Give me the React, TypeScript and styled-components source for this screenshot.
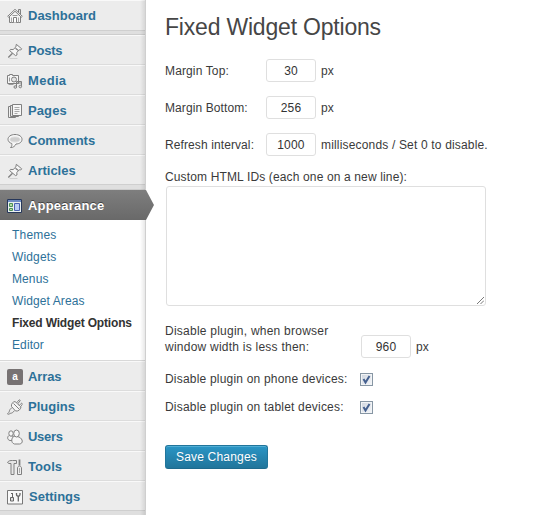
import React from "react";
import styled, { createGlobalStyle, css } from "styled-components";

const GlobalStyle = createGlobalStyle`
  * { box-sizing: border-box; }
  body { margin: 0; background: #fff; overflow: hidden; }
  body, input, textarea, button { font-family: "Liberation Sans", Arial, sans-serif; }
`;

const Page = styled.div`
  display: flex;
  width: 550px;
  height: 515px;
  font-size: 12px;
  color: #3a3a3a;
`;

const Sidebar = styled.nav`
  width: 146px;
  flex: none;
  position: relative;
  background: #ececec;
  border-right: 1px solid #cfcfcf;
  &::after {
    content: "";
    position: absolute;
    top: 0;
    bottom: 0;
    right: 0;
    width: 5px;
    background: linear-gradient(to right, rgba(0, 0, 0, 0), rgba(0, 0, 0, 0.09));
  }
`;

const MenuItem = styled.a<{ $first?: boolean; $last?: boolean }>`
  display: flex;
  align-items: center;
  height: ${(p) => (p.$first ? 31 : 30)}px;
  padding: ${(p) => (p.$first ? 0 : 1)}px 0 0 7px;
  border-top: 1px solid #f9f9f9;
  border-bottom: 1px solid ${(p) => (p.$last ? "#cfcfcf" : "#dcdcdc")};
  color: #2d7199;
  font-size: 13px;
  font-weight: bold;
  text-decoration: none;
`;

const MenuIcon = styled.svg`
  width: 16px;
  height: 16px;
  flex: none;
  margin-right: 5px;
  fill: none;
  stroke: #808080;
  stroke-width: 1;
`;

const MenuLabel = styled.span<{ $spacing?: number; $indent?: number }>`
  letter-spacing: ${(p) => p.$spacing ?? 0}px;
  margin-left: ${(p) => p.$indent ?? 0}px;
  line-height: 16px;
`;

const Separator = styled.div<{ $height: number }>`
  height: ${(p) => p.$height}px;
  background: #dfdfdf;
  border-bottom: 1px solid #cdcdcd;
`;

const Current = styled.a`
  display: flex;
  align-items: center;
  position: relative;
  z-index: 1;
  width: 154px;
  height: 30px;
  padding: 2px 0 0 7px;
  background: linear-gradient(#7e7e7e, #696969);
  clip-path: polygon(0 0, 146px 0, 154px 15px, 146px 30px, 0 30px);
  color: #fff;
  font-size: 13px;
  font-weight: bold;
  text-shadow: 0 -1px 0 #444;
`;

const Submenu = styled.div`
  display: flex;
  flex-direction: column;
  height: 141px;
  padding: 4px 0 0 12px;
  background: #fff;
  border-bottom: 1px solid #d8d8d8;
`;

const SubLink = styled.a<{ $active?: boolean; $spacing?: number }>`
  height: 22px;
  line-height: 22px;
  white-space: nowrap;
  letter-spacing: ${(p) => p.$spacing ?? 0}px;
  color: #2d7199;
  ${(p) =>
    p.$active &&
    css`
      color: #333;
      font-weight: bold;
    `}
`;

const Content = styled.main`
  flex: 1;
  padding: 12px 0 0 19px;
`;

const Title = styled.h1`
  margin: 0 0 17px;
  height: 30px;
  line-height: 30px;
  font-size: 23px;
  font-weight: normal;
  letter-spacing: -0.2px;
  color: #464646;
`;

const FieldRow = styled.div<{ $height: number; $align?: string }>`
  display: flex;
  align-items: ${(p) => p.$align ?? "center"};
  height: ${(p) => p.$height}px;
`;

const FieldLabel = styled.label<{ $width?: number; $spacing?: number; $lift?: number }>`
  width: ${(p) => (p.$width ? `${p.$width}px` : "auto")};
  padding-bottom: ${(p) => p.$lift ?? 0}px;
  line-height: 16px;
  white-space: nowrap;
  letter-spacing: ${(p) => p.$spacing ?? 0}px;
`;

const NumberInput = styled.input`
  width: 50px;
  height: 23px;
  padding: 0;
  margin: 0 5px 0 0;
  border: 1px solid #dfdfdf;
  border-radius: 3px;
  background: #fff;
  color: #333;
  font-size: 12px;
  letter-spacing: 0.2px;
  text-align: center;
`;

const IdsLabel = styled(FieldLabel)`
  display: block;
  margin-top: 13px;
`;

const IdsArea = styled.div`
  display: flex;
  position: relative;
  width: 320px;
  height: 120px;
  margin: 1px 0 17px 1px;
`;

const IdsInput = styled.textarea`
  flex: 1;
  border: 1px solid #dfdfdf;
  border-radius: 3px;
  resize: none;
  background: #fff;
`;

const Grip = styled.svg`
  position: absolute;
  right: 2px;
  bottom: 2px;
  width: 7px;
  height: 7px;
  stroke: #666;
  stroke-width: 1;
  fill: none;
`;

const Check = styled.span`
  display: flex;
  width: 13px;
  height: 13px;
  border: 1px solid #8796a4;
  background: linear-gradient(135deg, #cfd5de, #f5f7fa);
  box-shadow: inset 0 0 0 1px #f2f4f6;
  svg {
    width: 11px;
    height: 11px;
    fill: none;
    stroke: #45608f;
    stroke-width: 2;
  }
`;

const SaveButton = styled.button`
  display: block;
  width: 103px;
  height: 24px;
  margin-top: 31px;
  padding: 0;
  border: 1px solid #21759b;
  border-bottom-color: #1e6a8d;
  border-radius: 3px;
  background: linear-gradient(#2a95c5, #21759b);
  box-shadow: inset 0 1px 0 rgba(120, 200, 230, 0.5);
  color: #fff;
  font-size: 12px;
  letter-spacing: 0.2px;
  text-shadow: 0 1px 0 rgba(0, 0, 0, 0.1);
`;

const icons: Record<string, React.ReactNode> = {
  home: (
    <>
      <path d="M2.5 8v6.500h11V8L8 3z" fill="#f6f6f6" />
      <path d="M11.500 4.500v-3h2v5" fill="#ddd" />
      <path d="M.7 8.300 8 1.300l7.300 7-1 .9L8 3.300 1.700 9.200z" fill="#fafafa" />
      <path d="M6.500 14.500v-5h3v5" fill="#fff" />
      <path d="M4.500 9.500v5M11.500 9.500v5" stroke="#aaa" />
      <path d="M5.500 7.500h5" stroke="#999" />
    </>
  ),
  pin: (
    <>
      <path d="m9.300 1.300 5.400 4.500-1 1.200-1.500-.2-2.400 2.700.2 2.500-1.500.6L2.700 7.700l.8-1.300 2.600.2 2.800-2.700z" fill="#f6f6f6" />
      <path d="M5.500 10.200 1.300 14.500M8.500 5.300l2.500 2" strokeWidth="1.300" />
      <path d="M2.500 15.500h8" stroke="#d0d0d0" />
    </>
  ),
  media: (
    <>
      <path d="M.5 2.500h2v-1h3v1h6v8H.5z" fill="#f5f5f5" />
      <circle cx="7" cy="6.500" r="2.500" fill="#e4e4e4" />
      <path d="M2.500 4.500v4M1.500 11.500h5" stroke="#999" />
      <path d="M9.500 14V8.500h5v5M9.500 10h5" />
      <circle cx="8.300" cy="14" r="1.300" fill="#ddd" />
      <circle cx="13.300" cy="13.500" r="1.300" fill="#ddd" />
    </>
  ),
  pages: (
    <>
      <path d="M3.500 3.500h-2v11h7V13" fill="#f0f0f0" />
      <path d="M5 2.500H3.500v11h8V12" fill="#e4e4e4" />
      <path d="M5.500 1.500h9v11h-9z" fill="#f7f7f7" />
      <path d="M7.500 4.500h5M7.500 6.500h5M7.500 8.500h5M7.500 10.500h3" stroke="#aaa" />
    </>
  ),
  comment: (
    <>
      <path d="M8 1.500c4 0 7 2 7 4.800s-2.500 4.600-6 4.700c-.8 2-3 3.800-5.500 3.500C5 13.300 5 12 4.800 10.500 2.500 9.800 1 8.300 1 6.300 1 3.500 4 1.500 8 1.500z" fill="#f8f8f8" />
      <path d="M8 4c3 0 5 1 5 2.500S11 9 8 9 3 8 3 6.500 5 4 8 4z" fill="#cfcfcf" stroke="#dcdcdc" />
    </>
  ),
  appearance: (
    <>
      <path d="M.5 1.500h14v13H.5z" fill="#eaf0ee" stroke="#26375a" />
      <path d="M1 3h13" stroke="#6f8dc4" strokeWidth="2" />
      <path d="M2.500 5.500h3v3h-3zM2.500 10.500h3v2h-3z" fill="#b4dba6" stroke="#4b9157" />
      <path d="M7.500 5.500h5v7h-5z" fill="#b9cdf4" stroke="#4a62b0" />
    </>
  ),
  plugin: (
    <>
      <path d="M4.500 7.500 8.500 12c3 .5 5-1.500 5.500-4L8 2.500C5.500 3 4 5 4.500 7.500z" fill="#f4f4f4" />
      <path d="M9.500 4 12 1c.7-.6 1.600.2 1 1l-2.500 3M12 7l2-2.500c.7-.7 1.700.1 1.100 1L13 8.500" fill="#fff" />
      <path d="M6.500 4.500 12 10M5 8.500 3 10.500c-.8 1 0 2-2.500 4.500l1 .7c2-2.200 3-1.200 4-2l2-2" />
    </>
  ),
  users: (
    <>
      <path d="M2.500 6.500C0 7 0 11 3 11.500h3V7z" fill="#f5f5f5" />
      <ellipse cx="4" cy="4.500" rx="2.200" ry="2.700" fill="#f5f5f5" />
      <path d="M8 7C4 8 3.500 14 7.500 15h5c4-.5 3.500-5-.5-7z" fill="#f5f5f5" />
      <ellipse cx="9.500" cy="4.500" rx="2.800" ry="3.500" fill="#f7f7f7" />
    </>
  ),
  tools: (
    <>
      <path d="M.5 3.500c1-2 3-2 5-2h4v3H7v11H4v-11H2z" fill="#e6e6e6" />
      <path d="M12.500 .5v6" strokeWidth="1.800" />
      <path d="M10.500 15.500V9c0-1 1-2 2-2s2 1 2 2v6.500z" fill="#eee" />
      <path d="M12.500 9v5" stroke="#aaa" />
    </>
  ),
  settings: (
    <>
      <path d="M.5 1.500h15v13.500H.5z" fill="#f9f9f9" stroke="#777" />
      <path d="M5.500 4v4M4 4.500h2" stroke="#666" />
      <path d="M3.500 8.500h3v3.500h-3z" fill="#ddd" stroke="#666" />
      <path d="M9.500 4v1.500c0 2.300 3.500 2.300 3.500 0V4M11.300 7.500V12.500" stroke="#666" strokeWidth="1.300" />
    </>
  ),
};

const ArrasBadge = styled.span`
  display: flex;
  align-items: center;
  justify-content: center;
  width: 16px;
  height: 16px;
  margin-right: 5px;
  border-radius: 2px;
  background: #777273;
  color: #fff;
  font: bold 10px/12px "Liberation Sans", sans-serif;
`;

interface Entry {
  label: string;
  icon: string;
  indent?: number;
  spacing?: number;
}

const topEntries: Entry[] = [
  { label: "Posts", icon: "pin", spacing: -0.2 },
  { label: "Media", icon: "media", spacing: 0.3 },
  { label: "Pages", icon: "pages", spacing: 0.1 },
  { label: "Comments", icon: "comment" },
  { label: "Articles", icon: "pin" },
];

const bottomEntries: Entry[] = [
  { label: "Arras", icon: "arras", spacing: -0.1 },
  { label: "Plugins", icon: "plugin" },
  { label: "Users", icon: "users", spacing: -0.3 },
  { label: "Tools", icon: "tools", spacing: 0.1 },
  { label: "Settings", icon: "settings", indent: 1 },
];

const Icon = ({ name }: { name: string }) =>
  name === "arras" ? <ArrasBadge>a</ArrasBadge> : <MenuIcon viewBox="0 0 16 16">{icons[name]}</MenuIcon>;

const Item = ({ entry, first, last }: { entry: Entry; first?: boolean; last?: boolean }) => (
  <MenuItem $first={first} $last={last}>
    <Icon name={entry.icon} />
    <MenuLabel $indent={entry.indent} $spacing={entry.spacing}>
      {entry.label}
    </MenuLabel>
  </MenuItem>
);

const Checkbox = () => (
  <Check role="checkbox" aria-checked="true">
    <svg viewBox="0 0 11 11">
      <path d="m2.500 5 2 3.500L8.500 2" />
    </svg>
  </Check>
);

export default function App() {
  return (
    <>
      <GlobalStyle />
      <Page>
        <Sidebar>
          <Item entry={{ label: "Dashboard", icon: "home" }} first last />
          <Separator $height={4} />
          {topEntries.map((e, i) => (
            <Item key={e.label} entry={e} last={i === topEntries.length - 1} />
          ))}
          <Separator $height={5} />
          <Current>
            <Icon name="appearance" />
            <MenuLabel $spacing={0.2}>Appearance</MenuLabel>
          </Current>
          <Submenu>
            <SubLink $spacing={0.2}>Themes</SubLink>
            <SubLink $spacing={0.15}>Widgets</SubLink>
            <SubLink $spacing={0.1}>Menus</SubLink>
            <SubLink $spacing={0.1}>Widget Areas</SubLink>
            <SubLink $active $spacing={-0.17}>Fixed Widget Options</SubLink>
            <SubLink $spacing={0.1}>Editor</SubLink>
          </Submenu>
          {bottomEntries.map((e, i) => (
            <Item key={e.label} entry={e} last={i === bottomEntries.length - 1} />
          ))}
          <Separator $height={5} />
        </Sidebar>
        <Content>
          <Title>Fixed Widget Options</Title>
          <FieldRow $height={23}>
            <FieldLabel $width={101} $spacing={0.13}>Margin Top:</FieldLabel>
            <NumberInput defaultValue="30" />
            <FieldLabel>px</FieldLabel>
          </FieldRow>
          <FieldRow $height={51}>
            <FieldLabel $width={101} $spacing={0.1}>Margin Bottom:</FieldLabel>
            <NumberInput defaultValue="256" />
            <FieldLabel>px</FieldLabel>
          </FieldRow>
          <FieldRow $height={23}>
            <FieldLabel $width={101} $spacing={0.1}>Refresh interval:</FieldLabel>
            <NumberInput defaultValue="1000" />
            <FieldLabel $spacing={0.17}>milliseconds / Set 0 to disable.</FieldLabel>
          </FieldRow>
          <IdsLabel $spacing={0.14}>Custom HTML IDs (each one on a new line):</IdsLabel>
          <IdsArea>
            <IdsInput />
            <Grip viewBox="0 0 8 8">
              <path d="M0 8 8 0M4 8l4-4" />
            </Grip>
          </IdsArea>
          <FieldRow $height={35} $align="flex-end">
            <FieldLabel $width={196} $spacing={0.24} $lift={3}>
              Disable plugin, when browser
              <br />
              window width is less then:
            </FieldLabel>
            <NumberInput defaultValue="960" />
            <FieldLabel $lift={3}>px</FieldLabel>
          </FieldRow>
          <FieldRow $height={42}>
            <FieldLabel $width={195} $spacing={0.2}>Disable plugin on phone devices:</FieldLabel>
            <Checkbox />
          </FieldRow>
          <FieldRow $height={14}>
            <FieldLabel $width={195} $spacing={0.2}>Disable plugin on tablet devices:</FieldLabel>
            <Checkbox />
          </FieldRow>
          <SaveButton>Save Changes</SaveButton>
        </Content>
      </Page>
    </>
  );
}
